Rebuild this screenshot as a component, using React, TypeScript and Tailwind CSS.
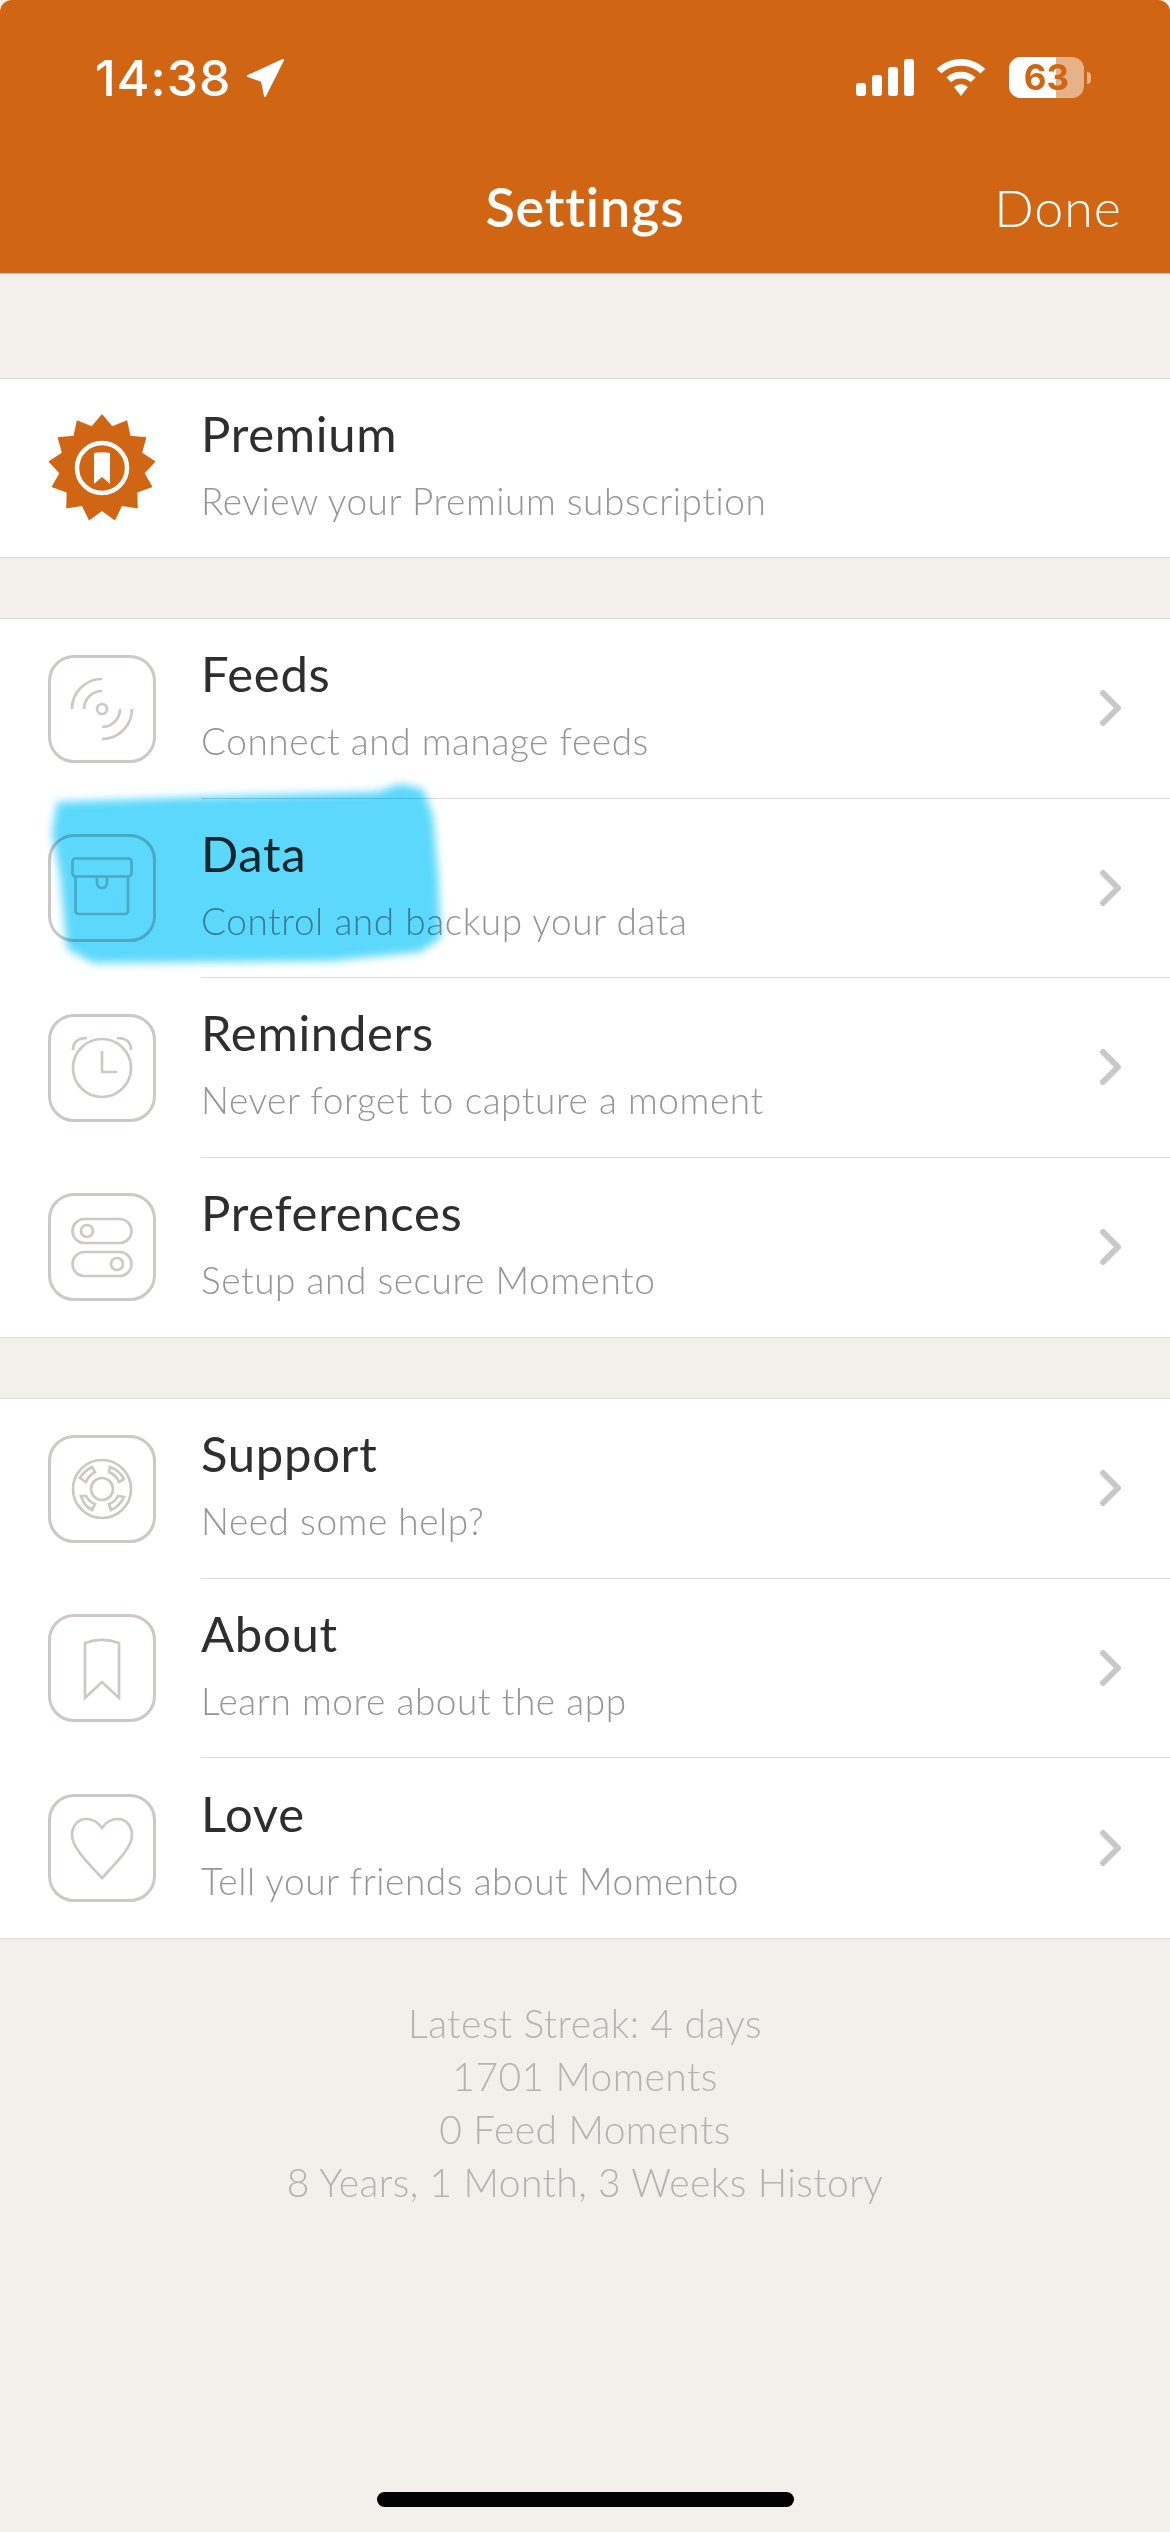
function IconBox({ children }: { children: React.ReactNode }) {
  return (
    <div className="w-[108px] h-[108px] shrink-0 rounded-[26px] border-[3px] border-[#cdc8c5] flex items-center justify-center">
      <svg width="108" height="108" viewBox="0 0 108 108" fill="none" stroke="#cdc8c5" strokeWidth="2.700" className="shrink-0">
        {children}
      </svg>
    </div>
  );
}

const icons: Record<string, React.ReactNode> = {
  Feeds: (
    <>
      <circle cx="54" cy="54" r="5" />
      <path d="M54 24 A30 30 0 0 0 24 54" />
      <path d="M54 36 A18 18 0 0 0 36 54" />
      <path d="M72 54 A18 18 0 0 1 54 72" />
      <path d="M84 54 A30 30 0 0 1 54 84" />
    </>
  ),
  Data: (
    <>
      <rect x="24.500" y="24.500" width="59" height="18" rx="3" />
      <path d="M27.500 42.500 V77 a3 3 0 0 0 3 3 H77 a3 3 0 0 0 3-3 V42.500" />
      <path d="M49 42.500 V49 a5 5 0 0 0 10 0 V42.500" />
    </>
  ),
  Reminders: (
    <>
      <circle cx="54" cy="54" r="29" />
      <path d="M54 37 V58 H69" />
      <path d="M25 36 C25 28 30 24 39 24" />
      <path d="M83 36 C83 28 78 24 69 24" />
    </>
  ),
  Preferences: (
    <>
      <rect x="24.500" y="26" width="59" height="24" rx="12" />
      <circle cx="39" cy="38" r="6" />
      <rect x="24.500" y="59" width="59" height="24" rx="12" />
      <circle cx="69" cy="71" r="6" />
    </>
  ),
  Support: (
    <>
      <circle cx="54" cy="54" r="29" />
      <circle cx="54" cy="54" r="11" />
      <path d="M32 43 Q36 36 44 32 L47 37 Q41 40 38 47 Z" />
      <path d="M62 32 Q71 35 76 44 L71 47 Q68 40 61 37 Z" />
      <path d="M33 61 L38 61 Q41 67 47 69 L44 75 Q36 71 33 61 Z" />
      <path d="M76 62 L70 61 Q67 67 61 69 L63 75 Q72 71 76 62 Z" />
    </>
  ),
  About: <path d="M37 29 C48 25 60 25 71 29 V84 L54 68 L37 84 Z" />,
  Love: (
    <path d="M54 34 C50 28 44 25 38 25 C30 25 24 32 24 41 C24 53 38 67 54 84 C70 67 84 53 84 41 C84 32 78 25 70 25 C64 25 58 28 54 34 Z" />
  ),
};

function Chevron() {
  return (
    <svg width="24" height="36" viewBox="0 0 24 36" fill="none" stroke="#c8c8c8" strokeWidth="6" strokeLinecap="round" strokeLinejoin="round" className="shrink-0">
      <path d="M4 3 L19 18 L4 33" />
    </svg>
  );
}

function RowText({ title, sub }: { title: string; sub: string }) {
  return (
    <div className="flex-1 pb-[9px]">
      <div className="text-[49px] leading-[60px] tracking-[0.7px] text-[#2e2e2e]">{title}</div>
      <div className="font-light text-[37px] leading-[46px] tracking-[0.55px] mt-[15px] text-[#959595]">{sub}</div>
    </div>
  );
}

function Row({ title, sub, icon, last }: { title: string; sub: string; icon: React.ReactNode; last?: boolean }) {
  return (
    <div className="h-[179.5px] flex items-stretch pl-[48px]">
      <div className="flex items-center w-[153px] shrink-0">{icon}</div>
      <div className={`flex-1 flex items-center pr-[47px] ${last ? "" : "border-b border-[#dcd9d7]"}`}>
        <RowText title={title} sub={sub} />
        <Chevron />
      </div>
    </div>
  );
}

function Group({ children }: { children: React.ReactNode }) {
  return <div className="bg-white border-y border-[#e0dbd8]">{children}</div>;
}

const starPoints = (() => {
  const pts: string[] = [];
  const n = 13;
  for (let i = 0; i < n * 2; i++) {
    const r = i % 2 === 0 ? 54 : 43;
    const a = (Math.PI * i) / n - Math.PI / 2;
    pts.push(`${(54 + r * Math.cos(a)).toFixed(1)},${(54 + r * Math.sin(a)).toFixed(1)}`);
  }
  return pts.join(" ");
})();

export default function App() {
  return (
    <div className="relative w-[1170px] h-[2532px] overflow-hidden bg-[#f3efeb] flex flex-col font-['Lato',sans-serif]">
      <header className="h-[274px] bg-[#d06513] shrink-0 rounded-t-[12px] border-b border-[#c9c2bd] text-white flex flex-col">
        <div className="h-[143px] pt-[47px] pl-[95px] pr-[79px] flex justify-between items-start">
          <div className="flex items-center gap-[13px]">
            <span className="font-['Inter',sans-serif] font-medium text-[50px] leading-[62px] tracking-[1px]">14:38</span>
            <svg width="40" height="40" viewBox="0 0 40 40" fill="white" stroke="white" strokeWidth="2" strokeLinejoin="round">
              <path d="M38 2 L3 18 L17 23 L20 38 Z" />
            </svg>
          </div>
          <div className="flex items-center pt-[10px]">
            <svg width="58" height="37" viewBox="0 0 58 37" fill="white" className="mr-[22px]">
              <rect x="0" y="24" width="10" height="13" rx="3" />
              <rect x="16" y="16" width="10" height="21" rx="3" />
              <rect x="32" y="8" width="10" height="29" rx="3" />
              <rect x="48" y="0" width="10" height="37" rx="3" />
            </svg>
            <svg width="50" height="37" viewBox="0 0 50 38" fill="white" className="mr-[23px]">
              <path d="M25 0 C15 0 7 4 0 10 L5 15 C10 10 17 7 25 7 C33 7 40 10 45 15 L50 10 C43 4 35 0 25 0 Z" />
              <path d="M25 13 C19 13 14 15 10 19 L15 24 C18 21 21 20 25 20 C29 20 32 21 35 24 L40 19 C36 15 31 13 25 13 Z" />
              <path d="M25 26 C22 26 20 27 18 29 L25 38 L32 29 C30 27 28 26 25 26 Z" />
            </svg>
            <div className="relative w-[75px] h-[41px] rounded-[12px] overflow-hidden bg-white/50 flex">
              <div className="w-[47px] h-full bg-white" />
              <div className="absolute inset-0 flex items-center justify-center font-['Inter',sans-serif] font-bold text-[35px] leading-none text-[#d06513]">63</div>
            </div>
            <div className="w-[4px] h-[12px] rounded-r-full bg-white/50 ml-[3px]" />
          </div>
        </div>
        <div className="flex-1 grid grid-cols-[1fr_auto_1fr] items-center px-[48px] pb-[2px]">
          <span />
          <span className="text-center text-[54px] tracking-[0.8px] font-semibold leading-[64px]">Settings</span>
          <span className="text-right text-[52px] tracking-[1px] font-light leading-[64px]">Done</span>
        </div>
      </header>

      <div className="h-[104px] shrink-0" />
      <Group>
        <div className="h-[178px] flex items-center pl-[48px]">
          <div className="w-[153px] shrink-0">
            <svg width="108" height="108" viewBox="0 0 108 108">
              <polygon points={starPoints} fill="#d06513" />
              <circle cx="54" cy="54" r="25" fill="none" stroke="white" strokeWidth="4.500" />
              <path d="M46 39 C51 38 57 38 62 39 V70 L54 63 L46 70 Z" fill="white" />
            </svg>
          </div>
          <RowText title="Premium" sub="Review your Premium subscription" />
        </div>
      </Group>
      <div className="h-[60px] shrink-0" />
      <Group>
        <Row title="Feeds" sub="Connect and manage feeds" icon={<IconBox>{icons.Feeds}</IconBox>} />
        <Row title="Data" sub="Control and backup your data" icon={<IconBox>{icons.Data}</IconBox>} />
        <Row title="Reminders" sub="Never forget to capture a moment" icon={<IconBox>{icons.Reminders}</IconBox>} />
        <Row title="Preferences" sub="Setup and secure Momento" icon={<IconBox>{icons.Preferences}</IconBox>} last />
      </Group>
      <div className="h-[60px] shrink-0" />
      <Group>
        <Row title="Support" sub="Need some help?" icon={<IconBox>{icons.Support}</IconBox>} />
        <Row title="About" sub="Learn more about the app" icon={<IconBox>{icons.About}</IconBox>} />
        <Row title="Love" sub="Tell your friends about Momento" icon={<IconBox>{icons.Love}</IconBox>} last />
      </Group>

      <div className="pt-[58px] text-center font-light text-[39px] leading-[53px] tracking-[0.4px] text-[#b6b2af]">
        <div>Latest Streak: 4 days</div>
        <div>1701 Moments</div>
        <div>0 Feed Moments</div>
        <div>8 Years, 1 Month, 3 Weeks History</div>
      </div>

      <div className="absolute left-[377px] bottom-[25px] w-[417px] h-[15px] rounded-full bg-black" />

      <svg className="absolute left-0 top-[770px] mix-blend-multiply pointer-events-none" width="500" height="210" viewBox="0 0 500 210">
        <defs>
          <filter id="scribble" x="-10%" y="-20%" width="120%" height="140%">
            <feGaussianBlur stdDeviation="4.500" />
          </filter>
        </defs>
        <path
          d="M57 32 L200 27 L377 22 L400 14 L423 19 L433 46 L438 105 L441 168 L420 182 L333 191 L93 193 L67 179 L60 105 L52 63 Z"
          fill="#5cd8fd"
          filter="url(#scribble)"
        />
      </svg>
    </div>
  );
}
